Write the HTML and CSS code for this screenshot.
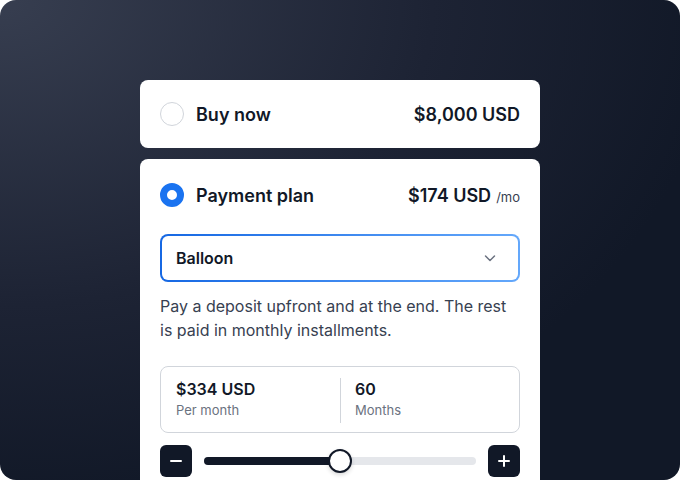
FILE: index.html
```html
<!DOCTYPE html>
<html lang="en">
<head>
    <meta charset="UTF-8">
    <meta name="viewport" content="width=device-width, initial-scale=1.0">
    <title>Payment options</title>
    <link rel="stylesheet" href="styles.css">
</head>
<body>
    <div class="frame">
        <div class="options">
            <div class="option">
                <div class="option-head">
                    <span class="radio"></span>
                    <span class="option-title">Buy now</span>
                    <span class="price">$8,000 USD</span>
                </div>
            </div>

            <div class="option option-open">
                <div class="option-head">
                    <span class="radio checked"></span>
                    <span class="option-title">Payment plan</span>
                    <span class="price">$174 USD<small>/mo</small></span>
                </div>

                <div class="select">
                    <span>Balloon</span>
                    <svg width="14" height="14" viewBox="0 0 14 14" fill="none">
                        <path d="M2.5 5l4.5 4.5L11.5 5" stroke="#6b7280" stroke-width="1.5" stroke-linecap="round" stroke-linejoin="round"/>
                    </svg>
                </div>

                <p class="desc">Pay a deposit upfront and at the end. The rest is paid in monthly installments.</p>

                <div class="stats">
                    <div class="stat">
                        <strong>$334 USD</strong>
                        <span>Per month</span>
                    </div>
                    <div class="stat">
                        <strong>60</strong>
                        <span>Months</span>
                    </div>
                </div>

                <div class="slider-row">
                    <button class="step-btn">
                        <svg width="14" height="14" viewBox="0 0 14 14"><path d="M2 7h10" stroke="#fff" stroke-width="2" stroke-linecap="round"/></svg>
                    </button>
                    <div class="track">
                        <div class="fill" style="width: 50%;"></div>
                        <div class="thumb" style="left: 50%;"></div>
                    </div>
                    <button class="step-btn">
                        <svg width="14" height="14" viewBox="0 0 14 14"><path d="M2 7h10M7 2v10" stroke="#fff" stroke-width="2" stroke-linecap="round"/></svg>
                    </button>
                </div>
            </div>
        </div>
    </div>
</body>
</html>
```

FILE: styles.css
```css
body {
    margin: 0;
    background-color: #fff;
    font-family: Inter, "Noto Sans", sans-serif;
    color: #111827;
}
.frame {
    width: 680px;
    height: 480px;
    border-radius: 16px;
    overflow: hidden;
    background: radial-gradient(ellipse at top left, #373e50 0%, #1d2334 45%, #111827 75%);
    padding-top: 80px;
    box-sizing: border-box;
}
.options {
    width: 400px;
    margin: 0 auto;
    display: flex;
    flex-direction: column;
    gap: 11px;
}
.option {
    background-color: #fff;
    border-radius: 8px;
    padding: 18px 20px;
}
.option-open {
    padding-top: 20px;
}
.option-head {
    display: flex;
    align-items: center;
    height: 32px;
}
.radio {
    width: 24px;
    height: 24px;
    border-radius: 50%;
    border: 1.5px solid #d1d5db;
    box-sizing: border-box;
    margin-right: 12px;
    flex-shrink: 0;
}
.radio.checked {
    border: 7px solid #1a73f0;
}
.option-title {
    font-size: 18px;
    font-weight: 600;
    flex: 1;
}
.price {
    font-size: 18px;
    font-weight: 600;
}
.price small {
    font-size: 13px;
    font-weight: 400;
    color: #374151;
    margin-left: 5px;
}
.select {
    margin-top: 23px;
    height: 48px;
    box-sizing: border-box;
    border: 2px solid transparent;
    border-radius: 8px;
    background: linear-gradient(#fff, #fff) padding-box,
                linear-gradient(90deg, #1668e3, #64a8fb) border-box;
    display: flex;
    align-items: center;
    justify-content: space-between;
    padding: 0 21px 0 14px;
    font-size: 16px;
    font-weight: 600;
}
.desc {
    margin: 12px 0 0;
    font-size: 16px;
    line-height: 24px;
    color: #374151;
}
.stats {
    margin-top: 24px;
    border: 1px solid #d1d5db;
    border-radius: 8px;
    padding: 11px 0 9px;
    display: grid;
    grid-template-columns: 1fr 1fr;
}
.stat {
    padding: 1px 15px 3px;
    display: flex;
    flex-direction: column;
}
.stat + .stat {
    border-left: 1px solid #d1d5db;
    padding-left: 14px;
}
.stat strong {
    font-size: 16px;
    font-weight: 600;
    line-height: 20px;
}
.stat span {
    font-size: 13px;
    line-height: 20px;
    margin-top: 1px;
    color: #6b7280;
}
.slider-row {
    margin-top: 12px;
    display: flex;
    align-items: center;
    gap: 12px;
}
.step-btn {
    width: 32px;
    height: 32px;
    border: none;
    border-radius: 6px;
    background-color: #111827;
    display: flex;
    align-items: center;
    justify-content: center;
    padding: 0;
}
.track {
    flex: 1;
    height: 8px;
    border-radius: 4px;
    background-color: #e5e7eb;
    position: relative;
}
.fill {
    height: 100%;
    border-radius: 4px;
    background-color: #111827;
}
.thumb {
    position: absolute;
    top: 50%;
    width: 24px;
    height: 24px;
    border-radius: 50%;
    background-color: #fff;
    border: 2px solid #111827;
    box-sizing: border-box;
    transform: translate(-50%, -50%);
    box-shadow: 0 2px 4px rgba(0, 0, 0, 0.15);
}
```
